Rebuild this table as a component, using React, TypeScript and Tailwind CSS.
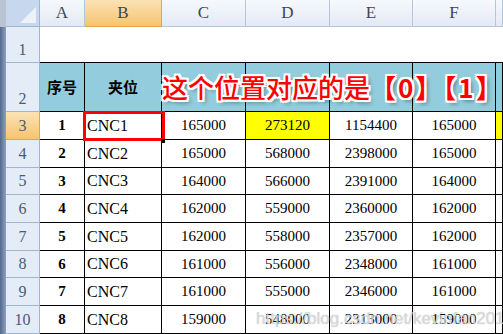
import React from "react";

const rows = [
  { n: 3, no: "1", name: "CNC1", c: "165000", d: "273120", e: "1154400", f: "165000", h: "h-[28px]" },
  { n: 4, no: "2", name: "CNC2", c: "165000", d: "568000", e: "2398000", f: "165000", h: "h-[28px]" },
  { n: 5, no: "3", name: "CNC3", c: "164000", d: "566000", e: "2391000", f: "164000", h: "h-[27px]" },
  { n: 6, no: "4", name: "CNC4", c: "162000", d: "559000", e: "2360000", f: "162000", h: "h-[28px]" },
  { n: 7, no: "5", name: "CNC5", c: "162000", d: "558000", e: "2357000", f: "162000", h: "h-[28px]" },
  { n: 8, no: "6", name: "CNC6", c: "161000", d: "556000", e: "2348000", f: "161000", h: "h-[27px]" },
  { n: 9, no: "7", name: "CNC7", c: "161000", d: "555000", e: "2346000", f: "161000", h: "h-[28px]" },
  { n: 10, no: "8", name: "CNC8", c: "159000", d: "548000", e: "2313000", f: "159000", h: "h-[28px]" },
];

const colHeads = [
  { l: "A", w: "w-[45px]" },
  { l: "B", w: "w-[77px]", sel: true },
  { l: "C", w: "w-[84px]" },
  { l: "D", w: "w-[84px]" },
  { l: "E", w: "w-[83px]" },
  { l: "F", w: "w-[83px]" },
  { l: "", w: "flex-1" },
];

const rowHead =
  "w-[34px] shrink-0 flex justify-center border-r border-b border-[#9eb6ce] text-[16px] text-[#4b5b72]";
const cell = "shrink-0 border-r border-b border-black flex items-center";

const App = () => {
  return (
    <div className="relative w-[503px] h-[334px] overflow-hidden bg-white flex font-['Liberation_Serif',serif]">
      {/* window edge */}
      <div className="w-[6px] shrink-0 flex flex-col">
        <div className="h-[27px] bg-[#b9c3d1]" />
        <div className="flex-1 bg-gradient-to-r from-[#55698c] to-[#8ea2c4]" />
      </div>

      <div className="flex-1 flex flex-col">
        {/* column headers */}
        <div className="flex h-[27px] shrink-0">
          <div className="w-[34px] shrink-0 relative bg-[#c6d7ee] border-r border-b border-[#9eb6ce]">
            <div className="absolute right-[3px] bottom-[3px] w-0 h-0 border-l-[16px] border-l-transparent border-b-[16px] border-b-[#eef3fa]" />
          </div>
          {colHeads.map((c, i) => (
            <div
              key={i}
              className={`${c.w} shrink-0 flex items-center justify-center border-r border-b text-[17px] text-[#3c4658] ${
                c.sel
                  ? "bg-gradient-to-b from-[#fbe2b4] to-[#f6c46d] border-[#e3a449]"
                  : "bg-gradient-to-b from-[#f6f8fc] to-[#e3eaf5] border-[#b4c6dc]"
              }`}
            >
              {c.l}
            </div>
          ))}
        </div>

        {/* row 1 */}
        <div className="flex h-[36px] shrink-0">
          <div className={`${rowHead} items-end bg-[#e4ecf7]`}>1</div>
          <div className="flex-1 border-b border-black" />
        </div>

        {/* row 2 headers */}
        <div className="flex h-[49px] shrink-0">
          <div className={`${rowHead} items-end bg-[#e4ecf7]`}>2</div>
          <div className={`${cell} w-[45px] justify-center bg-[#93cddd] font-['Noto_Sans_CJK_SC',sans-serif] font-bold text-[15px]`}>
            序号
          </div>
          <div className={`${cell} w-[77px] justify-center bg-[#93cddd] font-['Noto_Sans_CJK_SC',sans-serif] font-bold text-[15px]`}>
            夹位
          </div>
          <div className={`${cell} w-[84px] bg-[#93cddd]`} />
          <div className={`${cell} w-[84px] bg-[#93cddd]`} />
          <div className={`${cell} w-[83px] bg-[#93cddd]`} />
          <div className={`${cell} w-[83px] bg-[#93cddd]`} />
          <div className={`${cell} flex-1 bg-[#93cddd]`} />
        </div>

        {/* data rows */}
        {rows.map((r) => (
          <div key={r.n} className={`flex ${r.h} shrink-0`}>
            <div
              className={`${rowHead} items-center ${
                r.n === 3 ? "bg-gradient-to-b from-[#fbe2b4] to-[#f6c46d] border-[#e3a449]" : "bg-[#e4ecf7]"
              }`}
            >
              {r.n}
            </div>
            <div className={`${cell} w-[45px] justify-center font-bold text-[15px]`}>{r.no}</div>
            <div className={`${cell} w-[77px] pl-[2px] text-[16px]`}>{r.name}</div>
            <div className={`${cell} w-[84px] justify-center text-[15px]`}>{r.c}</div>
            <div className={`${cell} w-[84px] justify-center text-[15px] ${r.n === 3 ? "bg-[#ffff00]" : ""}`}>{r.d}</div>
            <div className={`${cell} w-[83px] justify-center text-[15px]`}>{r.e}</div>
            <div className={`${cell} w-[83px] justify-center text-[15px]`}>{r.f}</div>
            <div className={`${cell} flex-1 ${r.n === 3 ? "bg-[#ffff00]" : ""}`} />
          </div>
        ))}
      </div>

      {/* selection box on B3 */}
      <div className="absolute left-[83px] top-[111px] w-[82px] h-[30px] border-[3px] border-[#ff0000]" />
      <div className="absolute left-[161px] top-[139px] w-[4px] h-[4px] bg-black" />

      {/* annotation */}
      <div className="absolute left-[162px] top-[72px] whitespace-nowrap text-[26px] leading-[30px] text-[#ff0000] font-['Noto_Sans_CJK_SC',sans-serif] font-medium [text-shadow:-2px_-2px_0_#fff,2px_-2px_0_#fff,-2px_2px_0_#fff,2px_2px_0_#fff,0_2px_0_#fff,0_-2px_0_#fff,2px_0_0_#fff,-2px_0_0_#fff,3px_3px_4px_rgba(0,0,0,0.45)]">
        这个位置对应的是<span className="tracking-[2px] font-bold">【0】【1</span><span className="font-bold">】</span>
      </div>

      {/* watermark */}
      <div className="absolute left-[256px] top-[306px] whitespace-nowrap text-[17px] text-[#e0e0e0]/80 font-['Liberation_Sans',sans-serif] [text-shadow:0_0_1px_rgba(120,120,120,0.5)]">
        https://blog.csdn.net/kevinfan2011
      </div>
    </div>
  );
};

export default App;
